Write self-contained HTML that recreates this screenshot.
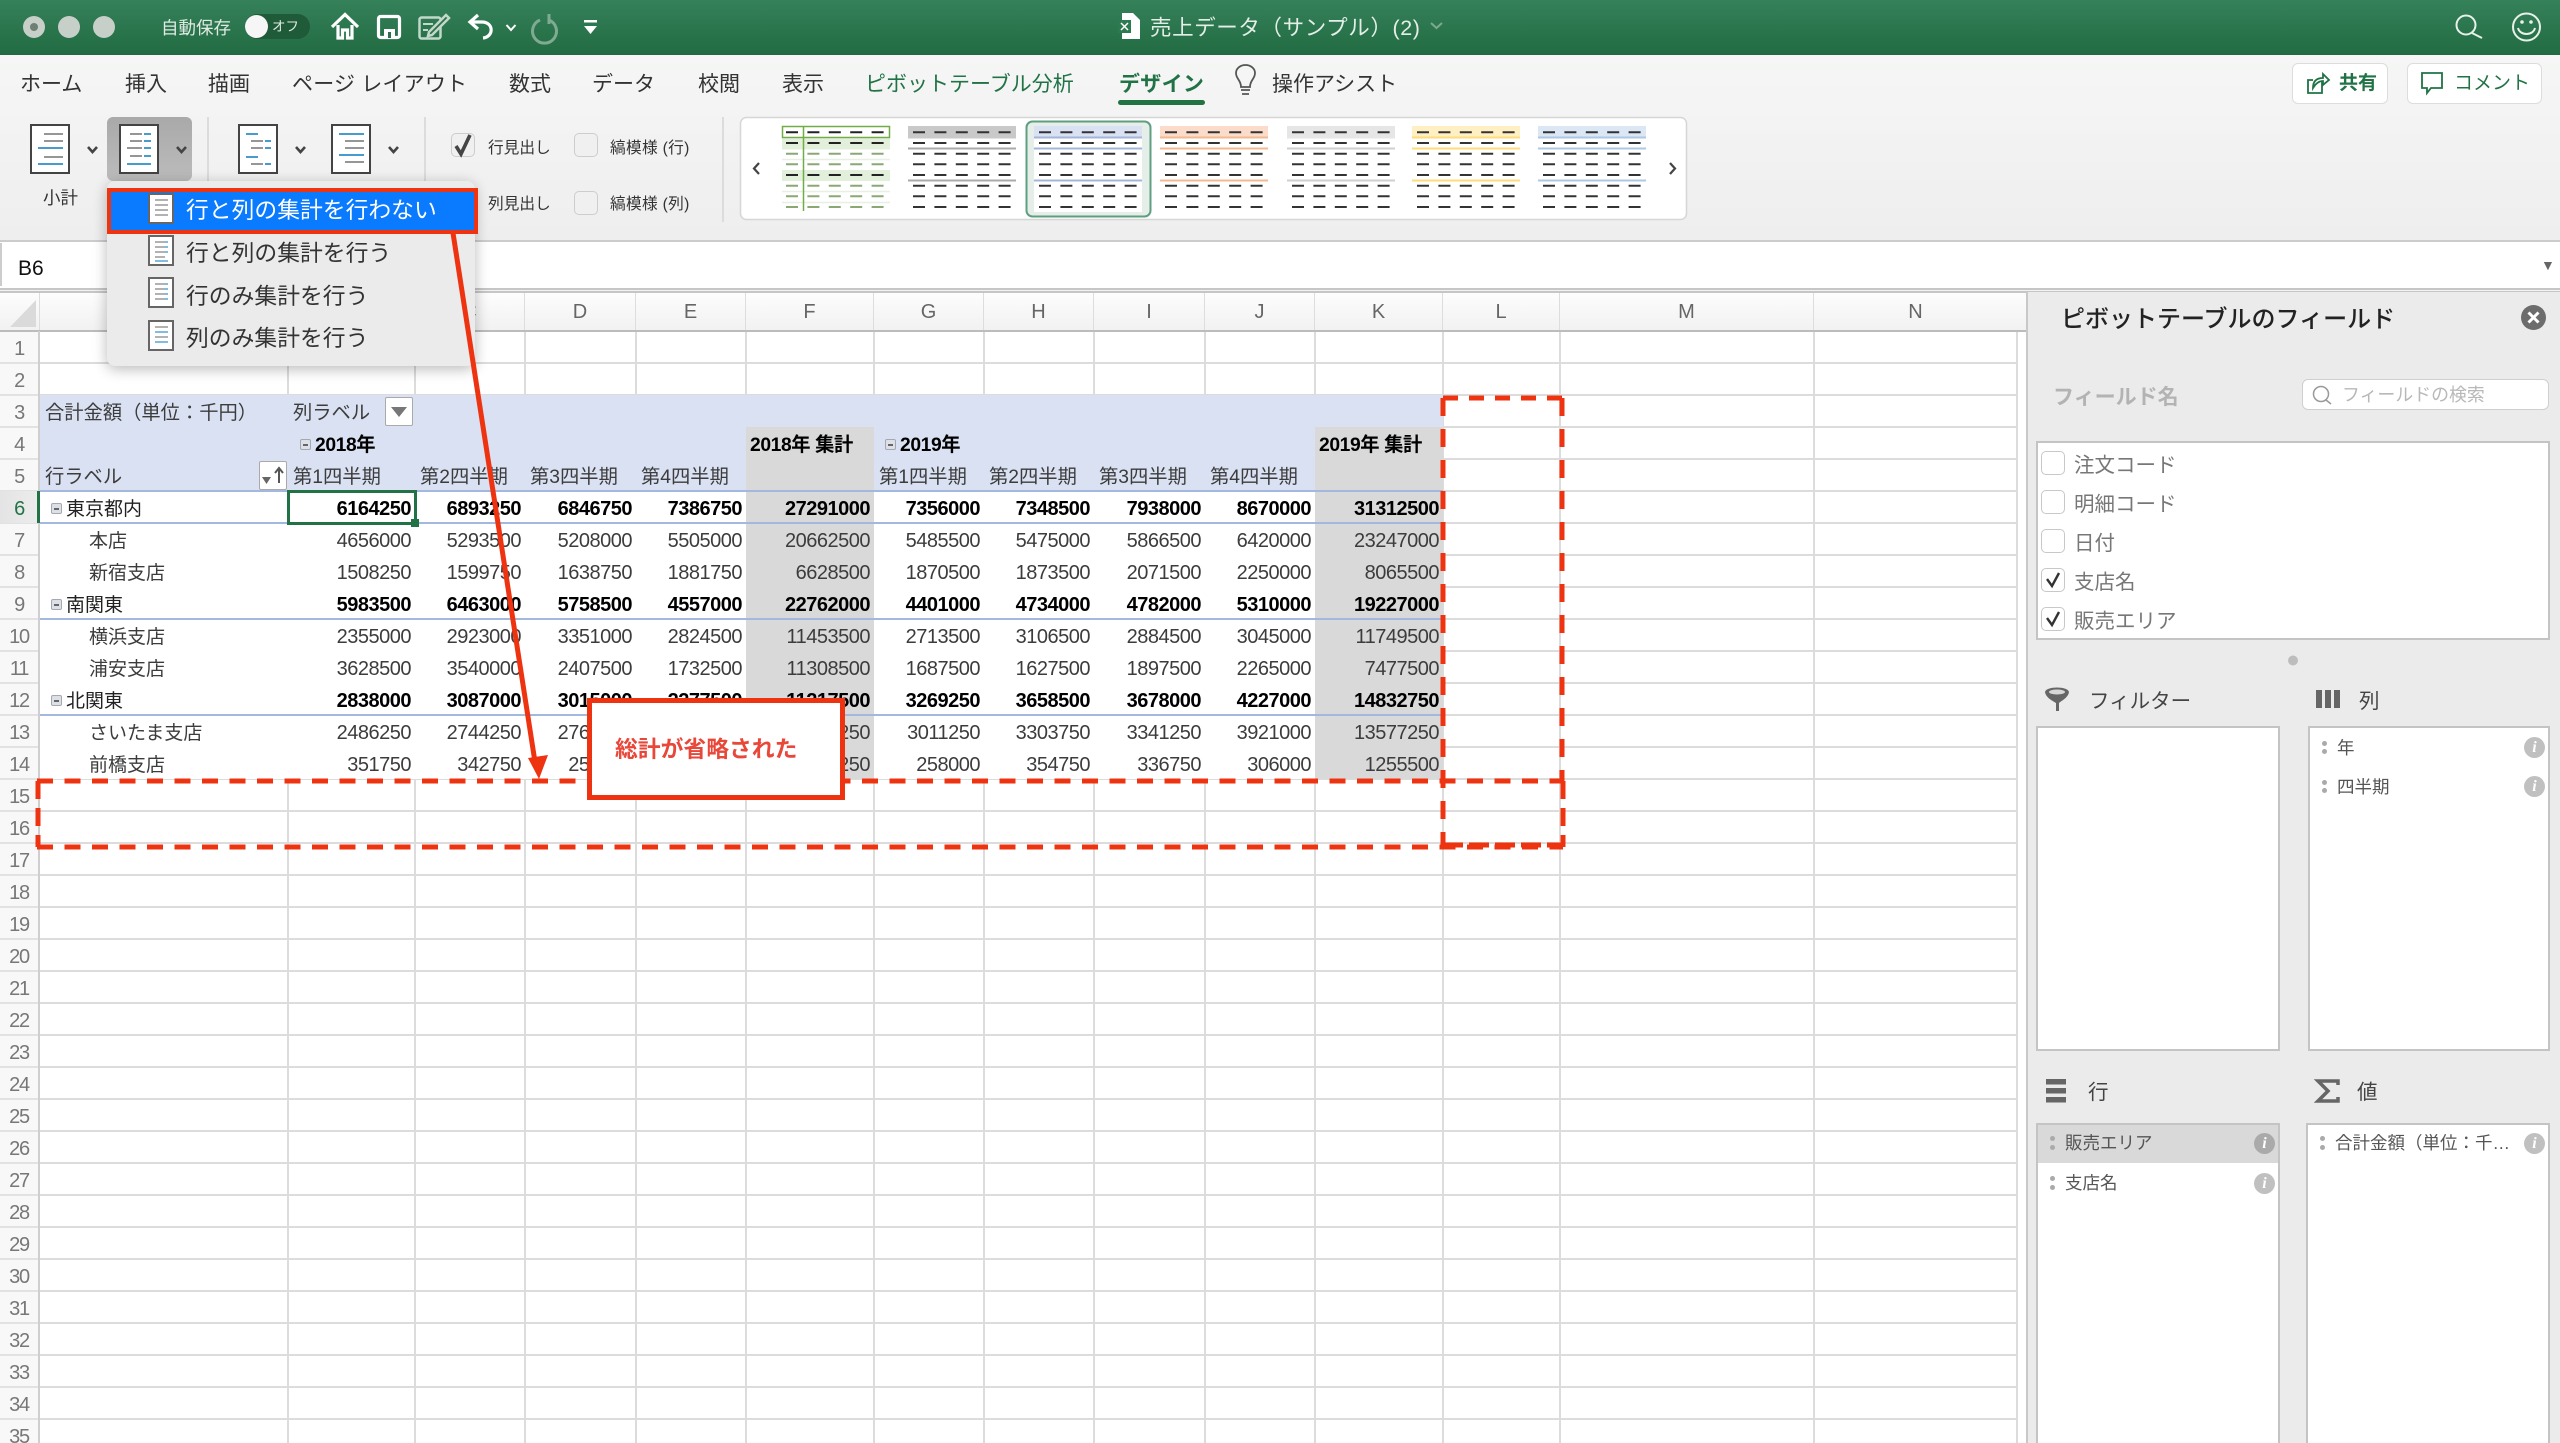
<!DOCTYPE html>
<html lang="ja"><head><meta charset="utf-8"><title>売上データ</title>
<style>
html,body{margin:0;padding:0;width:2560px;height:1443px;overflow:hidden;background:#fff}
body{position:relative;font-family:"Liberation Sans","Noto Sans CJK JP",sans-serif;color:#333}
.a,.t{position:absolute}
.t{white-space:nowrap;line-height:1}
svg{position:absolute;left:0;top:0;overflow:visible}
.tab{font-size:21px;top:74px;color:#333}
.grn{color:#217346}
.cb{position:absolute;width:24px;height:24px;box-sizing:border-box;background:#f0f0f0;border:1.5px solid #cdcdcd;border-radius:5px}
.pc{position:absolute;left:2041px;width:24px;height:24px;box-sizing:border-box;background:#fff;border:1.5px solid #c8c8c8;border-radius:5px}
.lf{font-size:20.5px;left:2074px;color:#777}
.box{position:absolute;box-sizing:border-box;background:#fff;border:2px solid #c4c4c4}
.it{font-size:17.5px;color:#555}
.gd{position:absolute;width:5px;height:5px;border-radius:50%;background:#aaa}
.inf{position:absolute;width:21px;height:21px;border-radius:50%;background:#c0c0c0;color:#fff;font:italic bold 16px/21px "Liberation Serif",serif;text-align:center}
.col{position:absolute;top:293px;height:38px;line-height:38px;text-align:center;font-size:20px;color:#666;border-right:1px solid #ddd;box-sizing:border-box}
#rn{position:absolute;left:0;top:331px;width:38px;font-size:20px;letter-spacing:-1.3px;color:#777;text-align:center}
#rn div{height:32px;line-height:36px}
#pv{position:absolute;left:40px;top:395px;width:1403px;table-layout:fixed;border-collapse:collapse;background:#fff}
#pv td{box-sizing:border-box;padding:5px 4px 0 0;height:32px;line-height:27px;font-size:20px;letter-spacing:-.5px;text-align:right;color:#3c3c3c;white-space:nowrap;overflow:visible}
#pv tr.b td{font-weight:bold;color:#000}
#pv tr.h td{background:#d9e1f2}
#pv td.g,#pv tr.h td.g{background:#d9d9d9}
#pv td.l{text-align:left;letter-spacing:0;font-size:19px;font-weight:normal;color:#3c3c3c;padding:5px 0 0 49px}
#pv tr.b td.l{padding-left:26px;color:#222;font-weight:normal}
#pv tr.h td.q{text-align:left;letter-spacing:0;font-size:19.3px;padding:5px 0 0 5px;color:#3c3c3c}
.mb{position:absolute;width:11px;height:11px;box-sizing:border-box;background:#dde0e6;border:1px solid #a4a8b0;border-radius:2px}
.mb::after{content:"";position:absolute;left:2px;right:2px;top:3.500px;height:2px;background:#666}
</style></head><body>

<!-- title bar -->
<div class="a" style="left:0;top:0;width:2560px;height:55px;background:linear-gradient(#358159,#226b43)"></div>
<!-- ribbon -->
<div class="a" style="left:0;top:55px;width:2560px;height:185px;background:linear-gradient(#f5f6f5,#eeeeee);border-bottom:2px solid #cccccc"></div>
<!-- formula bar -->
<div class="a" style="left:0;top:242px;width:2560px;height:46px;background:#fff"></div>
<div class="a" style="left:0;top:243px;width:2px;height:43px;background:#ccc"></div>
<div class="a" style="left:0;top:288px;width:2560px;height:5px;box-sizing:border-box;background:#f2f2f2;border-top:2px solid #c6c6c6;border-bottom:2px solid #c6c6c6"></div>
<div class="t" style="left:18px;top:258px;font-size:21px;color:#111">B6</div>
<div class="t" style="left:2541px;top:258px;font-size:14px;color:#666">▼</div>

<!-- sheet header -->
<div class="a" style="left:0;top:293px;width:2026px;height:38px;background:linear-gradient(#fdfdfd,#f1f1f1)"></div>
<div class="col" style="left:0;width:40px"></div>
<div class="col" style="left:40px;width:248px">A</div>
<div class="col" style="left:288px;width:127px">B</div>
<div class="col" style="left:415px;width:110px">C</div>
<div class="col" style="left:525px;width:111px">D</div>
<div class="col" style="left:636px;width:110px">E</div>
<div class="col" style="left:746px;width:128px">F</div>
<div class="col" style="left:874px;width:110px">G</div>
<div class="col" style="left:984px;width:110px">H</div>
<div class="col" style="left:1094px;width:111px">I</div>
<div class="col" style="left:1205px;width:110px">J</div>
<div class="col" style="left:1315px;width:128px">K</div>
<div class="col" style="left:1443px;width:117px">L</div>
<div class="col" style="left:1560px;width:254px">M</div>
<div class="col" style="left:1814px;width:203px;border-right:0">N</div>
<svg width="40" height="40" style="left:0;top:293px"><polygon points="36,7 36,34 10,34" fill="#dadada"/></svg>
<div class="a" style="left:0;top:330px;width:2026px;height:2px;background:#bcbcbc"></div>

<!-- row header -->
<div class="a" style="left:0;top:332px;width:40px;height:1111px;background:#f8f8f8 repeating-linear-gradient(to bottom,transparent 0,transparent 30px,#e2e2e2 30px,#e2e2e2 32px)"></div>
<div class="a" style="left:0;top:491px;width:38px;height:32px;background:linear-gradient(90deg,#e4e4e4,#ececec)"></div>
<div class="a" style="left:38px;top:331px;width:2px;height:1112px;background:#cfcfcf"></div>
<div class="a" style="left:37px;top:491px;width:3px;height:32px;background:#217346"></div>
<div id="rn"><div>1</div><div>2</div><div>3</div><div>4</div><div>5</div><div style="color:#217346">6</div><div>7</div><div>8</div><div>9</div><div>10</div><div>11</div><div>12</div><div>13</div><div>14</div><div>15</div><div>16</div><div>17</div><div>18</div><div>19</div><div>20</div><div>21</div><div>22</div><div>23</div><div>24</div><div>25</div><div>26</div><div>27</div><div>28</div><div>29</div><div>30</div><div>31</div><div>32</div><div>33</div><div>34</div><div>35</div></div>

<!-- grid -->
<div class="a" style="left:40px;top:332px;width:1977px;height:1111px;background:repeating-linear-gradient(to bottom,transparent 0,transparent 30px,#dcdcdc 30px,#dcdcdc 32px)"></div>
<svg width="2560" height="1443"><path d="M288 332V1443M415 332V1443M525 332V1443M636 332V1443M746 332V1443M874 332V1443M984 332V1443M1094 332V1443M1205 332V1443M1315 332V1443M1443 332V1443M1560 332V1443M1814 332V1443M2017 332V1443" stroke="#dcdcdc" stroke-width="2" fill="none"/></svg>

<!-- pivot table -->
<table id="pv"><colgroup><col style="width:248px"><col style="width:127px"><col style="width:110px"><col style="width:111px"><col style="width:110px"><col style="width:128px"><col style="width:110px"><col style="width:110px"><col style="width:111px"><col style="width:110px"><col style="width:128px"></colgroup>
<tr class="h"><td class="q">合計金額（単位：千円）</td><td class="q">列ラベル</td><td></td><td></td><td></td><td></td><td></td><td></td><td></td><td></td><td></td></tr>
<tr class="h"><td></td><td class="q" style="font-weight:bold;color:#000;padding-left:27px;letter-spacing:-.4px">2018年</td><td></td><td></td><td></td><td class="g q" style="font-weight:bold;color:#000;padding-left:4px;letter-spacing:-.4px">2018年 集計</td><td class="q" style="font-weight:bold;color:#000;padding-left:26px;letter-spacing:-.4px">2019年</td><td></td><td></td><td></td><td class="g q" style="font-weight:bold;color:#000;padding-left:4px;letter-spacing:-.4px">2019年 集計</td></tr>
<tr class="h"><td class="q">行ラベル</td><td class="q">第1四半期</td><td class="q">第2四半期</td><td class="q">第3四半期</td><td class="q">第4四半期</td><td class="g"></td><td class="q">第1四半期</td><td class="q">第2四半期</td><td class="q">第3四半期</td><td class="q">第4四半期</td><td class="g"></td></tr>
<tr class="b"><td class="l">東京都内</td><td>6164250</td><td>6893250</td><td>6846750</td><td>7386750</td><td class="g">27291000</td><td>7356000</td><td>7348500</td><td>7938000</td><td>8670000</td><td class="g">31312500</td></tr>
<tr><td class="l">本店</td><td>4656000</td><td>5293500</td><td>5208000</td><td>5505000</td><td class="g">20662500</td><td>5485500</td><td>5475000</td><td>5866500</td><td>6420000</td><td class="g">23247000</td></tr>
<tr><td class="l">新宿支店</td><td>1508250</td><td>1599750</td><td>1638750</td><td>1881750</td><td class="g">6628500</td><td>1870500</td><td>1873500</td><td>2071500</td><td>2250000</td><td class="g">8065500</td></tr>
<tr class="b"><td class="l">南関東</td><td>5983500</td><td>6463000</td><td>5758500</td><td>4557000</td><td class="g">22762000</td><td>4401000</td><td>4734000</td><td>4782000</td><td>5310000</td><td class="g">19227000</td></tr>
<tr><td class="l">横浜支店</td><td>2355000</td><td>2923000</td><td>3351000</td><td>2824500</td><td class="g">11453500</td><td>2713500</td><td>3106500</td><td>2884500</td><td>3045000</td><td class="g">11749500</td></tr>
<tr><td class="l">浦安支店</td><td>3628500</td><td>3540000</td><td>2407500</td><td>1732500</td><td class="g">11308500</td><td>1687500</td><td>1627500</td><td>1897500</td><td>2265000</td><td class="g">7477500</td></tr>
<tr class="b"><td class="l">北関東</td><td>2838000</td><td>3087000</td><td>3015000</td><td>2277500</td><td class="g">11217500</td><td>3269250</td><td>3658500</td><td>3678000</td><td>4227000</td><td class="g">14832750</td></tr>
<tr><td class="l">さいたま支店</td><td>2486250</td><td>2744250</td><td>2761250</td><td>2002500</td><td class="g">9994250</td><td>3011250</td><td>3303750</td><td>3341250</td><td>3921000</td><td class="g">13577250</td></tr>
<tr><td class="l">前橋支店</td><td>351750</td><td>342750</td><td>253750</td><td>275000</td><td class="g">1223250</td><td>258000</td><td>354750</td><td>336750</td><td>306000</td><td class="g">1255500</td></tr>
</table>
<!-- pivot rules -->
<div class="a" style="left:40px;top:490px;width:1403px;height:2px;background:#a3b8de"></div>
<div class="a" style="left:40px;top:522px;width:1403px;height:2px;background:#a3b8de"></div>
<div class="a" style="left:40px;top:618px;width:1403px;height:2px;background:#a3b8de"></div>
<div class="a" style="left:40px;top:714px;width:1403px;height:2px;background:#a3b8de"></div>
<div class="mb" style="left:51px;top:503px"></div><div class="mb" style="left:51px;top:599px"></div><div class="mb" style="left:51px;top:695px"></div>
<div class="mb" style="left:300px;top:439px"></div><div class="mb" style="left:885px;top:439px"></div>
<!-- filter buttons -->
<div class="a" style="left:385px;top:397px;width:28px;height:29px;box-sizing:border-box;background:#fff;border:1.5px solid #aaa;border-radius:2px"></div>
<svg width="2560" height="600"><polygon points="391,407 407,407 399,417" fill="#777"/></svg>
<div class="a" style="left:259px;top:461px;width:28px;height:29px;box-sizing:border-box;background:#fff;border:1.5px solid #aaa;border-radius:2px"></div>
<svg width="2560" height="600"><polygon points="262,477 271,477 266.500,484" fill="#666"/><path d="M279 483V469M275 473L279 468L283 473" stroke="#555" stroke-width="2" fill="none"/></svg>
<!-- selected cell -->
<div class="a" style="left:287px;top:490px;width:130px;height:35px;box-sizing:border-box;border:3px solid #217346"></div>
<div class="a" style="left:411px;top:519px;width:8px;height:8px;background:#217346"></div>

<!-- title bar content -->
<div class="a" style="left:23px;top:16px;width:22px;height:22px;border-radius:50%;background:#c7cfc9"></div>
<div class="a" style="left:30px;top:23px;width:8px;height:8px;border-radius:50%;background:#6f7f74"></div>
<div class="a" style="left:58px;top:16px;width:22px;height:22px;border-radius:50%;background:#c7cfc9"></div>
<div class="a" style="left:93px;top:16px;width:22px;height:22px;border-radius:50%;background:#c7cfc9"></div>
<div class="t" style="left:161px;top:20px;font-size:17.5px;color:#dfeae3">自動保存</div>
<div class="a" style="left:245px;top:14px;width:65px;height:25px;border-radius:13px;background:#1f5a39"></div>
<div class="a" style="left:245px;top:15px;width:23px;height:23px;border-radius:50%;background:#f6f6f6"></div>
<div class="t" style="left:272px;top:20px;font-size:13.500px;color:#dfeae3">オフ</div>
<svg width="2560" height="293">
 <g fill="none" stroke="#fff" stroke-width="3.200">
  <path d="M332 27L345 14.500L358 27M338 25V38H342.500V30H347.500V38H352V25"/>
  <rect x="378.500" y="16.500" width="21" height="21" rx="2"/>
  <path d="M483 38C494 37 494 22 482 22H471M478 15L470 22L478 29"/>
  <path d="M506.500 25L511 30L515.500 25" stroke-width="2"/>
 </g>
 <rect x="384" y="29" width="11" height="9" fill="#fff"/><rect x="388" y="32" width="3" height="6" fill="#2b7049"/>
 <g fill="none" stroke="#c2d8ca" stroke-width="2.500">
  <rect x="419.500" y="17.500" width="21" height="21" rx="2"/>
  <path d="M429 32L446 15L449 18L432 35L428 36Z" fill="#2b7049"/>
  <path d="M423 24H433M423 30H428" stroke-width="2"/>
 </g>
 <g fill="none" stroke="#7fab92" stroke-width="3">
  <path d="M540 20A12 12 0 1 0 549 20"/><path d="M549 14V24" />
 </g>
 <rect x="584" y="20" width="13" height="2.500" fill="#fff"/><polygon points="584,26 597,26 590.500,34" fill="#fff"/>
 <!-- doc -->
 <path d="M1122 13H1133L1140 20V39H1122Z" fill="#fff"/><rect x="1118" y="20" width="13" height="13" fill="#2c7a50"/><path d="M1121 23L1128 30M1128 23L1121 30" stroke="#fff" stroke-width="1.500"/>
 <path d="M1431 23L1436.500 28L1442 23" fill="none" stroke="#7ea98f" stroke-width="2"/>
 <!-- search, smile -->
 <g fill="none" stroke="#e8f0ea" stroke-width="2">
  <circle cx="2466" cy="25" r="9.500"/><path d="M2472 33L2482 38"/>
  <circle cx="2526.500" cy="27" r="13.500"/><path d="M2518 28C2520 36 2533 36 2535 28"/>
 </g>
 <circle cx="2522" cy="22" r="1.800" fill="#e8f0ea"/><circle cx="2531" cy="22" r="1.800" fill="#e8f0ea"/>
</svg>
<div class="t" style="left:1150px;top:18px;font-size:21.500px;letter-spacing:.6px;color:#e4eee8">売上データ（サンプル）(2)</div>

<!-- tabs -->
<div class="t tab" style="left:20px">ホーム</div>
<div class="t tab" style="left:125px">挿入</div>
<div class="t tab" style="left:208px">描画</div>
<div class="t tab" style="left:292px;letter-spacing:.2px">ページ レイアウト</div>
<div class="t tab" style="left:509px">数式</div>
<div class="t tab" style="left:592px">データ</div>
<div class="t tab" style="left:698px">校閲</div>
<div class="t tab" style="left:782px">表示</div>
<div class="t tab grn" style="left:865px">ピボットテーブル分析</div>
<div class="t tab grn" style="left:1119px;font-weight:bold;letter-spacing:.3px">デザイン</div>
<div class="a" style="left:1118px;top:100px;width:87px;height:5px;border-radius:3px;background:#217346"></div>
<div class="t tab" style="left:1272px">操作アシスト</div>
<svg width="2560" height="293"><g fill="none" stroke="#555" stroke-width="1.800"><path d="M1241 87C1241 80 1236 79 1236 73A9.500 8 0 0 1 1255 73C1255 79 1250 80 1250 87Z"/><path d="M1241 90H1250M1242 94H1249"/></g></svg>
<div class="a" style="left:2292px;top:63px;width:96px;height:41px;box-sizing:border-box;background:#fff;border:1.5px solid #ddd;border-radius:6px"></div>
<div class="a" style="left:2407px;top:63px;width:135px;height:41px;box-sizing:border-box;background:#fff;border:1.5px solid #ddd;border-radius:6px"></div>
<div class="t grn" style="left:2339px;top:74px;font-size:19px;font-weight:bold">共有</div>
<div class="t grn" style="left:2454px;top:74px;font-size:19px">コメント</div>
<svg width="2560" height="293"><g fill="none" stroke="#217346" stroke-width="1.800"><path d="M2322 82V93H2308V80H2313"/><path d="M2313 88C2313 80 2318 78 2323 78V74L2329 80L2323 85V81C2319 81 2316 83 2313 88Z"/><path d="M2422 73H2442V88H2431L2427 93V88H2422Z"/></g></svg>

<!-- ribbon: pressed button -->
<div class="a" style="left:107px;top:117px;width:85px;height:64px;border-radius:6px;background:linear-gradient(#a9a9a9,#bcbcbc)"></div>
<div class="a" style="left:207px;top:117px;width:1.500px;height:105px;background:#dcdcdc"></div>
<div class="a" style="left:424px;top:117px;width:1.500px;height:105px;background:#dcdcdc"></div>
<div class="a" style="left:722px;top:117px;width:1.500px;height:105px;background:#dcdcdc"></div>
<svg width="2560" height="293">
 <g fill="#fff" stroke="#444" stroke-width="2"><rect x="31" y="125" width="38" height="48"/><rect x="120" y="125" width="38" height="48"/><rect x="239" y="125" width="38" height="48"/><rect x="332" y="125" width="38" height="48"/></g>
 <g stroke-width="1.800" fill="none">
  <path stroke="#888" d="M44 134H63M44 141H63M44 157H63"/><path stroke="#2f8fc6" d="M38 148H63M38 164H63"/>
  <path stroke="#888" d="M130 134H142M130 141H142M127 148H142M130 156H142"/><path stroke="#2f8fc6" d="M144 134H151M144 141H151M144 148H151M144 156H151M127 164H151"/>
  <path stroke="#2f8fc6" d="M246 134H258M246 157H258M265 141H271M265 148H271M265 164H271"/><path stroke="#888" d="M251 141H263M251 148H263M251 164H263"/>
  <path stroke="#2f8fc6" d="M339 134H364M339 155H364"/><path stroke="#888" d="M345 141H364M345 148H364M345 162H364"/>
 </g>
 <g fill="none" stroke="#444" stroke-width="2.600"><path d="M88 147L92.500 152L97 147M177 147L181.500 152L186 147M296 147L300.500 152L305 147M389 147L393.500 152L398 147"/></g>
 <!-- gallery -->
 <rect x="740.500" y="117.500" width="946" height="102" rx="6" fill="#fff" stroke="#d6d6d6" stroke-width="1.500"/>
 <path d="M759 163L754 168.500L759 174M1670 163L1675 168.500L1670 174" fill="none" stroke="#444" stroke-width="2.200"/>
 <defs>
  <g id="d" stroke="#333" stroke-width="2" stroke-dasharray="12 9.400"><path d="M5 6.300H104M5 17H104M5 27.700H104M5 38.300H104M5 49H104M5 59.700H104M5 70.300H104M5 81H104"/></g>
 </defs>
 <!-- 1 green -->
 <rect x="782" y="138.500" width="108" height="11" fill="#e2efda"/><rect x="782" y="170" width="108" height="11" fill="#e2efda"/>
 <path d="M782 159.500H890M782 191.500H890M782 202.500H890" stroke="#e8efe3" stroke-width="1.500"/>
 <rect x="782.500" y="126.500" width="107" height="11" fill="#fff" stroke="#70ad47" stroke-width="1.500"/>
 <path d="M803.500 126V211" stroke="#70ad47" stroke-width="1.500"/>
 <g stroke-width="2" stroke-dasharray="12 9.400" fill="none"><path stroke="#222" d="M786 132.300H890M786 143H890M786 175H890"/><path stroke="#8aa873" d="M786 153.700H890M786 164.300H890M786 185.700H890M786 196.300H890M786 207H890"/></g>
 <!-- 2 gray -->
 <rect x="908" y="126" width="108" height="12.500" fill="#c9c9c9"/><path d="M908 148.500H1016M908 180.500H1016" stroke="#aaa" stroke-width="2"/><use href="#d" x="908" y="126"/>
 <!-- 3 selected -->
 <rect x="1026.500" y="121.500" width="124" height="95" rx="6" fill="#e6eee9" stroke="#5f9f80" stroke-width="2"/>
 <rect x="1034" y="126" width="108" height="86" fill="#fff"/>
 <rect x="1034" y="126" width="108" height="12.500" fill="#d9e1f2"/><path d="M1034 137.500H1142M1034 148.500H1142M1034 180.500H1142" stroke="#a4b5dc" stroke-width="2"/><use href="#d" x="1034" y="126"/>
 <!-- 4 orange -->
 <rect x="1160" y="126" width="108" height="12.500" fill="#fbdccb"/><path d="M1160 137.500H1268M1160 148.500H1268M1160 180.500H1268" stroke="#f4b88f" stroke-width="2"/><use href="#d" x="1160" y="126"/>
 <!-- 5 light -->
 <rect x="1287" y="126" width="108" height="12.500" fill="#e6e6e6"/><path d="M1287 148.500H1395M1287 180.500H1395" stroke="#cfcfcf" stroke-width="2"/><use href="#d" x="1287" y="126"/>
 <!-- 6 yellow -->
 <rect x="1412" y="126" width="108" height="12.500" fill="#fff0c4"/><path d="M1412 137.500H1520M1412 148.500H1520M1412 180.500H1520" stroke="#ffdc7a" stroke-width="2"/><use href="#d" x="1412" y="126"/>
 <!-- 7 blue -->
 <rect x="1538" y="126" width="108" height="12.500" fill="#dbe7f4"/><path d="M1538 137.500H1646M1538 148.500H1646M1538 180.500H1646" stroke="#adc8e6" stroke-width="2"/><use href="#d" x="1538" y="126"/>
</svg>
<div class="t" style="left:43px;top:190px;font-size:17.500px;color:#333">小計</div>
<div class="cb" style="left:451px;top:133px"></div>
<svg width="2560" height="293"><path d="M456 146L461 154L470 135" fill="none" stroke="#444" stroke-width="3.600"/></svg>
<div class="t" style="left:488px;top:141px;font-size:15.700px">行見出し</div>
<div class="cb" style="left:574px;top:133px"></div>
<div class="t" style="left:610px;top:141px;font-size:15.700px;letter-spacing:.3px">縞模様 (行)</div>
<div class="t" style="left:488px;top:197px;font-size:15.700px">列見出し</div>
<div class="cb" style="left:574px;top:191px"></div>
<div class="t" style="left:610px;top:197px;font-size:15.700px;letter-spacing:.3px">縞模様 (列)</div>

<!-- side panel -->
<div class="a" style="left:2026px;top:292px;width:534px;height:1151px;box-sizing:border-box;background:#ebebeb;border-left:2px solid #c8c8c8"></div>
<div class="t" style="left:2061px;top:308px;font-size:24px;font-weight:500;color:#222">ピボットテーブルのフィールド</div>
<div class="a" style="left:2521px;top:305px;width:25px;height:25px;border-radius:50%;background:#6c6c6c"></div>
<svg width="2560" height="1443"><path d="M2528.500 312.500L2538.500 322.500M2538.500 312.500L2528.500 322.500" stroke="#fff" stroke-width="3"/></svg>
<div class="t" style="left:2053px;top:387px;font-size:21px;font-weight:bold;color:#b3b3b3">フィールド名</div>
<div class="a" style="left:2302px;top:379px;width:247px;height:31px;box-sizing:border-box;background:#fff;border:1.500px solid #cfcfcf;border-radius:6px"></div>
<svg width="2560" height="1443"><g fill="none" stroke="#999" stroke-width="1.500"><circle cx="2321" cy="394" r="7.500"/><path d="M2326 400L2331 404"/></g></svg>
<div class="t" style="left:2342px;top:387px;font-size:17.900px;color:#b8b8b8">フィールドの検索</div>
<div class="box" style="left:2036px;top:441px;width:514px;height:199px"></div>
<div class="pc" style="top:451px"></div><div class="t lf" style="top:456px">注文コード</div>
<div class="pc" style="top:490px"></div><div class="t lf" style="top:495px">明細コード</div>
<div class="pc" style="top:529px"></div><div class="t lf" style="top:534px">日付</div>
<div class="pc" style="top:568px"></div><div class="t lf" style="top:573px">支店名</div>
<div class="pc" style="top:607px"></div><div class="t lf" style="top:612px">販売エリア</div>
<svg width="2560" height="1443"><path d="M2047 579L2052 586L2059 573M2047 618L2052 625L2059 612" fill="none" stroke="#333" stroke-width="2.400"/>
 <circle cx="2293" cy="660.500" r="5" fill="#bdbdbd"/>
 <path d="M2045 692C2046 686 2068 686 2069 692C2068 698 2061 701 2059 703V711L2056 711V703C2053 701 2046 698 2045 692Z" fill="#666"/><ellipse cx="2057" cy="692" rx="8" ry="2.500" fill="#d8d8d8"/>
 <rect x="2316" y="690" width="6" height="18" fill="#666"/><rect x="2325" y="690" width="6" height="18" fill="#666"/><rect x="2334" y="690" width="6" height="18" fill="#666"/>
 <rect x="2046" y="1079" width="20" height="5.500" fill="#666"/><rect x="2046" y="1088" width="20" height="5.500" fill="#666"/><rect x="2046" y="1097" width="20" height="5.500" fill="#666"/>
 <path d="M2338 1085V1081H2318L2328 1091L2318 1101H2338V1097" fill="none" stroke="#666" stroke-width="3.500"/>
</svg>
<div class="t" style="left:2089px;top:692px;font-size:20.500px;color:#444">フィルター</div>
<div class="t" style="left:2359px;top:692px;font-size:20.500px;color:#444">列</div>
<div class="box" style="left:2036px;top:726px;width:244px;height:325px"></div>
<div class="box" style="left:2308px;top:726px;width:242px;height:325px"></div>
<div class="gd" style="left:2322px;top:741px"></div><div class="gd" style="left:2322px;top:749px"></div>
<div class="t it" style="left:2337px;top:740px">年</div><div class="inf" style="left:2524px;top:737px">i</div>
<div class="gd" style="left:2322px;top:780px"></div><div class="gd" style="left:2322px;top:788px"></div>
<div class="t it" style="left:2337px;top:779px">四半期</div><div class="inf" style="left:2524px;top:776px">i</div>
<div class="t" style="left:2088px;top:1083px;font-size:20.500px;color:#444">行</div>
<div class="t" style="left:2357px;top:1083px;font-size:20.500px;color:#444">値</div>
<div class="box" style="left:2036px;top:1123px;width:244px;height:330px"></div>
<div class="box" style="left:2306px;top:1123px;width:244px;height:330px"></div>
<div class="a" style="left:2038px;top:1125px;width:240px;height:38px;background:#d9d9d9"></div>
<div class="gd" style="left:2050px;top:1136px"></div><div class="gd" style="left:2050px;top:1145px"></div>
<div class="t it" style="left:2065px;top:1135px">販売エリア</div><div class="inf" style="left:2254px;top:1133px;background:#aaa">i</div>
<div class="gd" style="left:2050px;top:1176px"></div><div class="gd" style="left:2050px;top:1185px"></div>
<div class="t it" style="left:2065px;top:1175px">支店名</div><div class="inf" style="left:2254px;top:1173px">i</div>
<div class="gd" style="left:2320px;top:1136px"></div><div class="gd" style="left:2320px;top:1145px"></div>
<div class="t it" style="left:2335px;top:1135px">合計金額（単位：千…</div><div class="inf" style="left:2524px;top:1133px">i</div>

<!-- dashed annotations -->
<svg width="2560" height="1443" fill="none" stroke="#ee3311" stroke-width="5">
 <path d="M37 781H1563M37 847H1563" stroke-dasharray="16 11.500"/>
 <path d="M38 781V847M1563 781V847" stroke-dasharray="18 9"/>
 <path d="M1443 398H1562" stroke-dasharray="15 11"/>
 <path d="M1443 398V847M1562 398V781" stroke-dasharray="18 13"/>
 <path d="M1443 845H1563" stroke-width="5" stroke-dasharray="20 6"/>
</svg>

<!-- dropdown -->
<div class="a" style="left:107px;top:181px;width:368px;height:185px;border-radius:8px;background:#ebebeb;box-shadow:0 3px 14px rgba(0,0,0,.28)"></div>
<div class="a" style="left:107px;top:188px;width:371px;height:46px;box-sizing:border-box;background:#0a7aff;border:4px solid #ee3311"></div>
<svg width="2560" height="400">
 <g fill="#fff" stroke="#666" stroke-width="2"><rect x="149" y="194" width="24" height="29"/><rect x="149" y="236" width="24" height="29"/><rect x="149" y="278" width="24" height="29"/><rect x="149" y="321" width="24" height="29"/></g>
 <g stroke-width="1.500" fill="none">
  <path stroke="#999" d="M155 200H168M155 205H168M155 210H168M155 215H168"/>
  <path stroke="#999" d="M155 242H165M155 247H165M155 252H165M155 257H165"/><path stroke="#5aa6d6" d="M165 242H168M165 247H168M165 252H168M155 261H168"/>
  <path stroke="#999" d="M155 284H165M155 289H165M155 294H165M155 299H165"/><path stroke="#5aa6d6" d="M165 284H168M165 289H168M165 294H168M165 299H168"/>
  <path stroke="#999" d="M155 327H168M155 337H168"/><path stroke="#5aa6d6" d="M155 332H168M155 342H168"/>
 </g>
</svg>
<div class="t" style="left:186px;top:199px;font-size:22.800px;color:#fff">行と列の集計を行わない</div>
<div class="t" style="left:186px;top:242px;font-size:22.800px;color:#333">行と列の集計を行う</div>
<div class="t" style="left:186px;top:285px;font-size:22.800px;color:#333">行のみ集計を行う</div>
<div class="t" style="left:186px;top:327px;font-size:22.800px;color:#333">列のみ集計を行う</div>

<!-- callout + arrow -->
<div class="a" style="left:587px;top:698px;width:258px;height:102px;box-sizing:border-box;background:#fff;border:5px solid #ee3311"></div>
<div class="t" style="left:615px;top:738px;font-size:22.800px;font-weight:bold;color:#e8473a">総計が省略された</div>
<svg width="2560" height="1443"><path d="M453 233L535 762" fill="none" stroke="#ee3311" stroke-width="5"/><polygon points="528,758 548,755 539,779" fill="#ee3311"/></svg>
</body></html>
